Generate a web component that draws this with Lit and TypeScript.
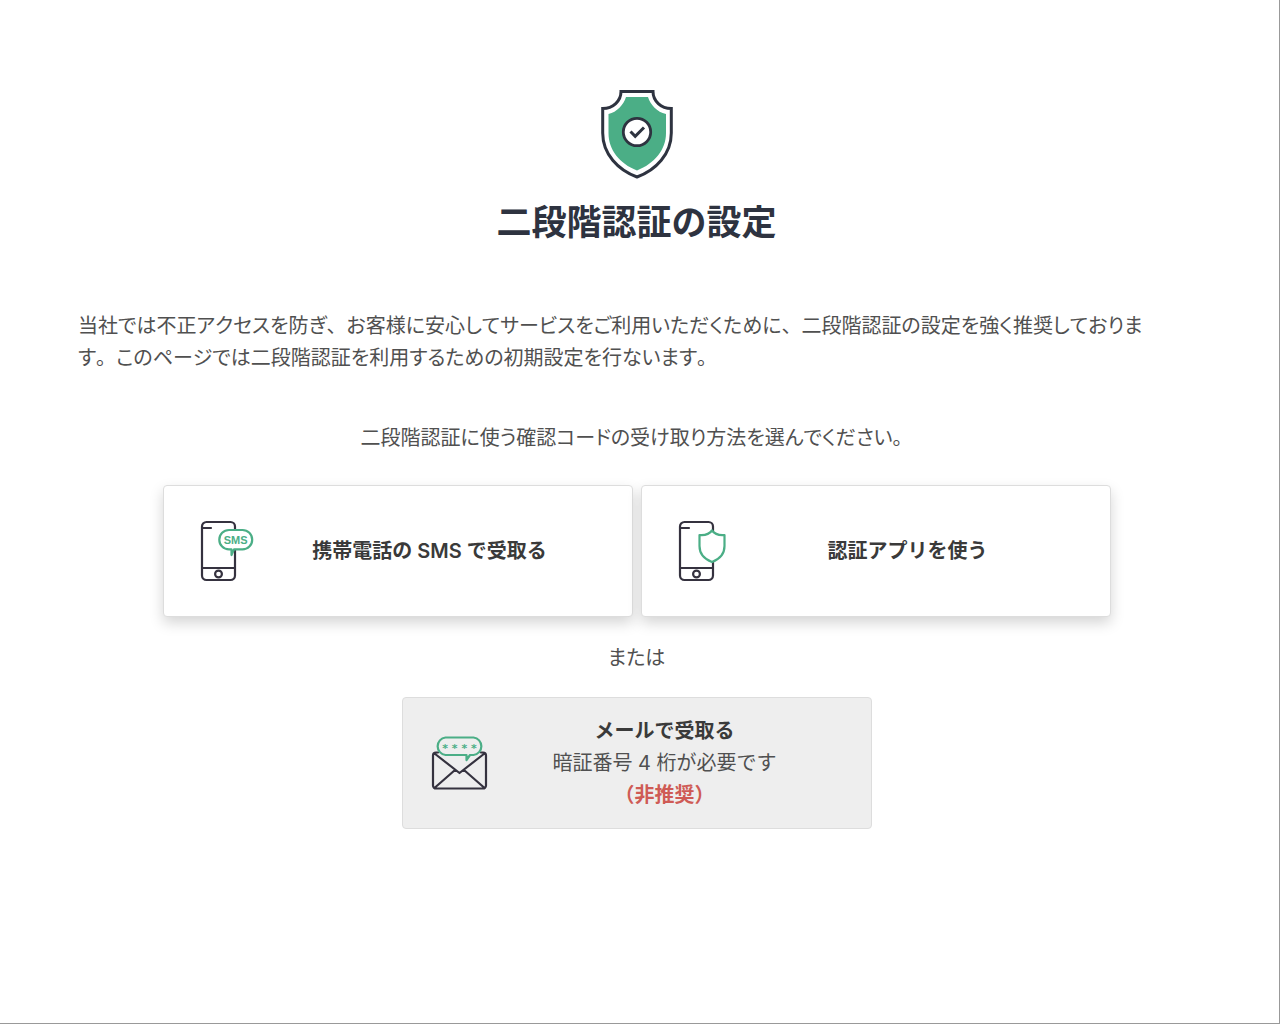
import { LitElement, html, css, svg } from "lit";
import { customElement } from "lit/decorators.js";

const phoneBody = svg`
  <rect x="10" y="3" width="33" height="58" rx="4.5" />
  <path d="M10 49H43M11 9H19" />
  <circle cx="26.5" cy="55" r="3.4" />
`;

const shieldIcon = html`
  <svg class="hero-icon" viewBox="0 0 72 90" aria-hidden="true">
    <path d="M20 1.5H52C52 11 60 18.5 70.3 18.5V43C70.3 64 55 80 36 87C17 80 1.7 64 1.7 43V18.5C12 18.5 20 11 20 1.5Z" fill="#fff" stroke="#2e3340" stroke-width="3" />
    <path d="M25 7H47C49.5 15 56 22 65 24V43C65 60 53.5 73.5 36 80.5C18.5 73.5 7.5 60 7.5 43V24C16 22 22.5 15 25 7Z" fill="#4bae86" />
    <circle cx="36" cy="42" r="13.7" fill="#fff" stroke="#2e3340" stroke-width="2.8" />
    <path d="M29.5 41.5L34.2 46.3L43 37.5" fill="none" stroke="#2e3340" stroke-width="3" />
  </svg>
`;

const smsIcon = html`
  <svg class="icon" viewBox="0 0 64 64" aria-hidden="true">
    <g class="dark">${phoneBody}</g>
    <path class="green white" d="M37 11H50.5A9.7 9.7 0 0 1 50.5 30.4H42L39.5 36V30.4H37A9.7 9.7 0 0 1 37 11Z" />
    <text class="sms" x="43.7" y="24.7" text-anchor="middle">SMS</text>
  </svg>
`;

const appIcon = html`
  <svg class="icon" viewBox="0 0 64 64" aria-hidden="true">
    <g class="dark">${phoneBody}</g>
    <path class="green white" d="M42 11.5C44.5 15 49 16.500 54.500 16V27C54.500 35 50 40 42 43C34 40 29.500 35 29.500 27V16C35 16.500 39.500 15 42 11.500Z" />
  </svg>
`;

const mailIcon = html`
  <svg class="icon" viewBox="0 0 64 64" aria-hidden="true">
    <path class="dark" d="M7 21.5H5A3 3 0 0 0 2 24.5V54.5A3 3 0 0 0 5 57.5H52A3 3 0 0 0 55 54.5V24.5A3 3 0 0 0 52 21.5H50M3.5 22.5L28.5 42L53.5 22.5M4 56.5L24 39M53 56.5L33 39" />
    <path class="green" d="M14.5 6.5H42.5A8.8 8.8 0 0 1 42.5 24H39L35.5 29V24H14.5A8.8 8.8 0 0 1 14.5 6.5Z" />
    <text class="stars" x="28.5" y="21" text-anchor="middle">* * * *</text>
  </svg>
`;

/* Kana is set with proportional widths while 、 and 。 keep their full width. */
const prose = (text: string) =>
  text.split(/([、。])/).map((part) =>
    part === "、" || part === "。" ? html`<span class="mark">${part}</span>` : part
  );

@customElement("app-root")
export class AppRoot extends LitElement {
  static styles = css`
    :host {
      display: block;
      box-sizing: border-box;
      min-height: 100vh;
      border-right: 1px solid #999;
      border-bottom: 1px solid #999;
      background: #fff;
      color: #505050;
      font-family: "Noto Sans CJK JP", sans-serif;
      font-size: 20px;
      line-height: 32px;
    }
    main {
      display: flex;
      flex-direction: column;
      align-items: center;
      padding: 90px 84px 64px 78px;
    }
    .hero-icon {
      display: block;
      width: 72px;
      height: 90px;
    }
    h1 {
      margin: 14px 0 0;
      color: #2e3340;
      font-size: 35px;
      line-height: 51px;
      font-weight: 700;
    }
    .intro,
    .lead,
    .or {
      font-feature-settings: "palt", "kern" 0;
      font-kerning: none;
    }
    .intro {
      align-self: stretch;
      margin: 64px 0 0;
      padding-right: 32px;
    }
    .lead {
      margin: 48px 0 0;
    }
    .mark {
      font-feature-settings: normal;
    }
    .methods {
      display: grid;
      grid-template-columns: 1fr 1fr;
      gap: 8px;
      width: 100%;
      max-width: 948px;
      margin-top: 32px;
    }
    .or {
      margin: 24px 0;
    }
    .fallback {
      width: 100%;
      max-width: 470px;
    }
    .method {
      display: flex;
      align-items: center;
      box-sizing: border-box;
      width: 100%;
      min-height: 132px;
      padding: 16px 28px;
      border: 1px solid #ddd;
      border-radius: 4px;
      background: #fff;
      box-shadow: 0 6px 14px rgba(0, 0, 0, 0.17);
      color: inherit;
      font: inherit;
      font-family: Inter, "Noto Sans CJK JP", sans-serif;
      cursor: pointer;
    }
    .method.muted {
      padding-right: 36px;
      background: #eee;
      box-shadow: none;
    }
    .label {
      flex: 1;
      display: flex;
      flex-direction: column;
      text-align: center;
    }
    .title {
      color: #3a3a3a;
      font-weight: 600;
    }
    .warning {
      color: #cf5b55;
      font-weight: 700;
    }
    .icon {
      flex: none;
      width: 64px;
      height: 64px;
    }
    .dark {
      fill: none;
      stroke: #35323f;
      stroke-width: 2.2;
      stroke-linecap: round;
      stroke-linejoin: round;
    }
    .green {
      fill: #eee;
      stroke: #4bae86;
      stroke-width: 2.2;
      stroke-linejoin: round;
    }
    .white {
      fill: #fff;
    }
    .sms {
      fill: #4bae86;
      font: 700 11px "Liberation Sans", sans-serif;
    }
    .stars {
      fill: #4bae86;
      font: 700 11px "DejaVu Sans", sans-serif;
    }
  `;

  render() {
    return html`
      <main>
        ${shieldIcon}
        <h1>二段階認証の設定</h1>
        <p class="intro">${prose("当社では不正アクセスを防ぎ、お客様に安心してサービスをご利用いただくために、二段階認証の設定を強く推奨しております。このページでは二段階認証を利用するための初期設定を行ないます。")}</p>
        <p class="lead">${prose("二段階認証に使う確認コードの受け取り方法を選んでください。")}</p>
        <div class="methods">
          <button class="method" type="button">
            ${smsIcon}
            <span class="label"><span class="title">携帯電話の SMS で受取る</span></span>
          </button>
          <button class="method" type="button">
            ${appIcon}
            <span class="label"><span class="title">認証アプリを使う</span></span>
          </button>
        </div>
        <p class="or">または</p>
        <div class="fallback">
          <button class="method muted" type="button">
            ${mailIcon}
            <span class="label">
              <span class="title">メールで受取る</span>
              <span>暗証番号 4 桁が必要です</span>
              <span class="warning">（非推奨）</span>
            </span>
          </button>
        </div>
      </main>
    `;
  }
}
